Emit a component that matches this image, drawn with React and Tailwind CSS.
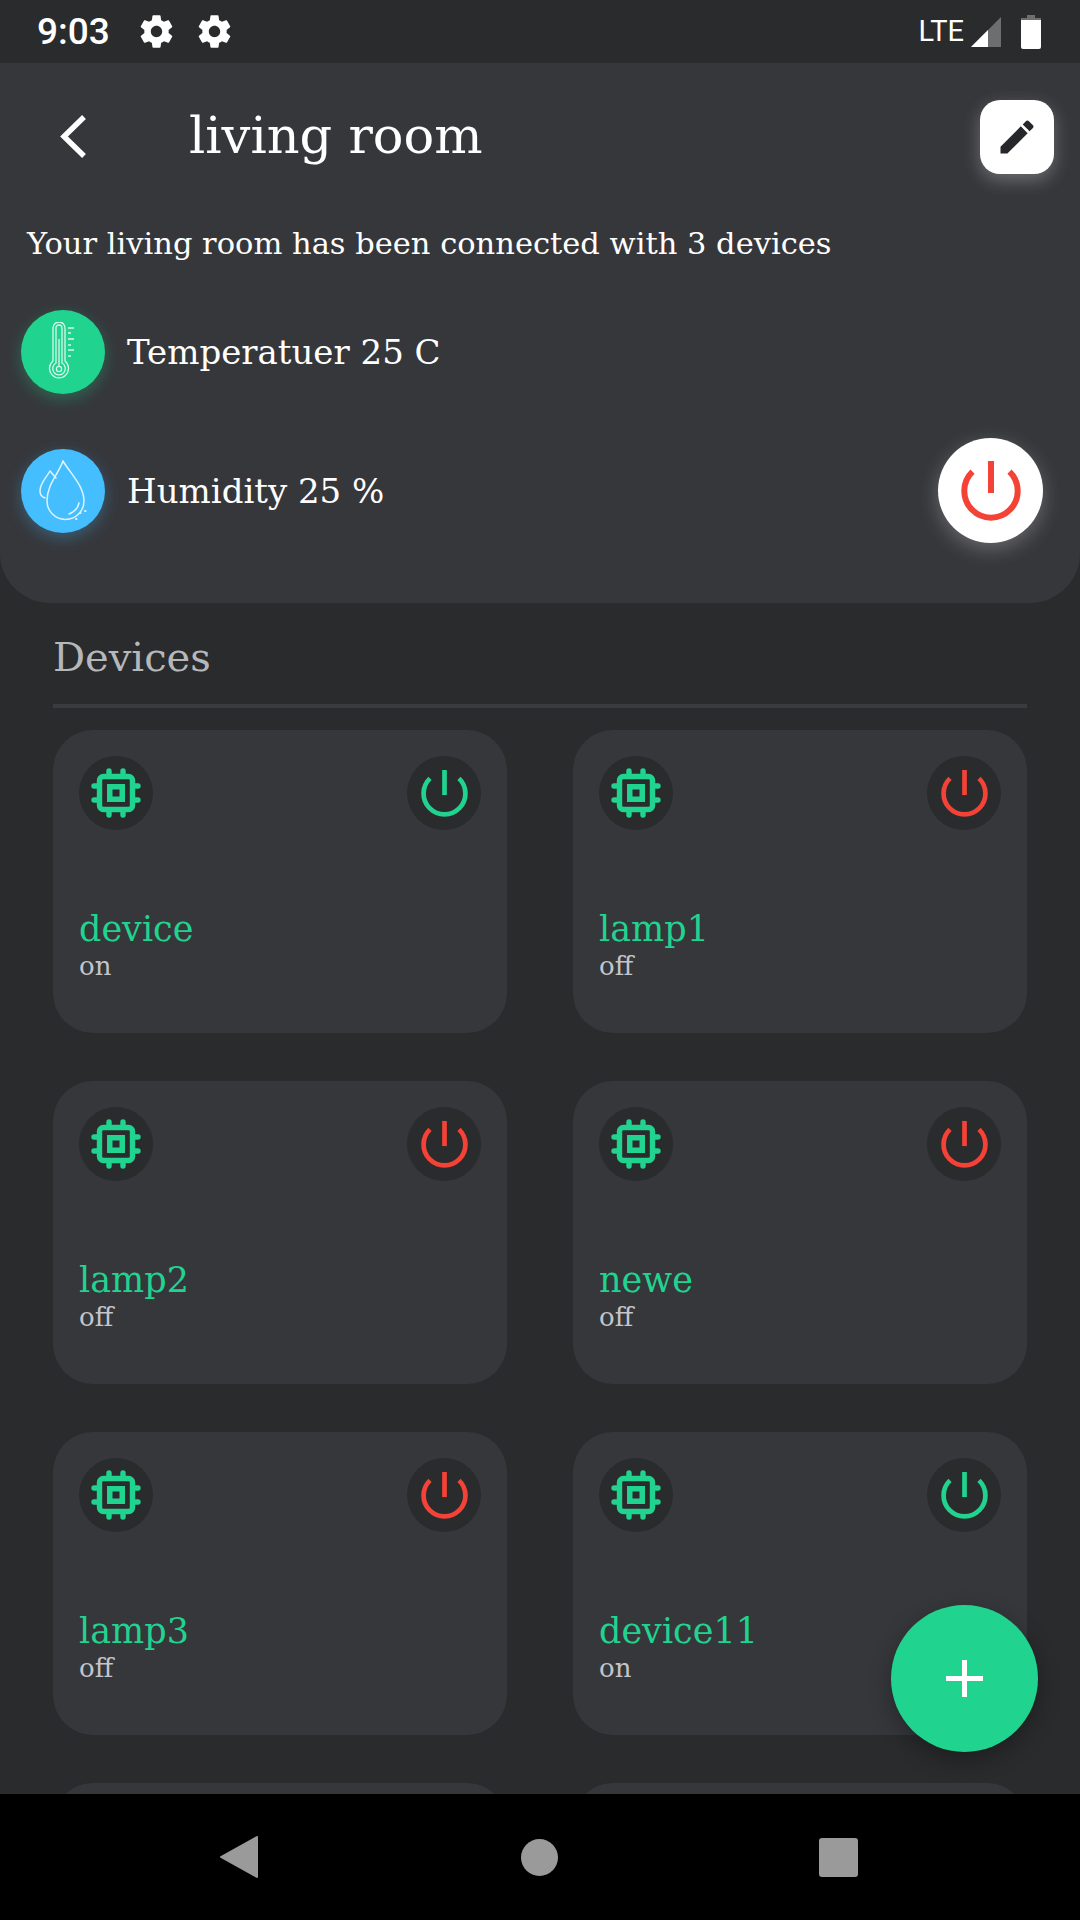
import React from "react";

const slab = "font-['DejaVu_Serif',serif]";

const devices = [
  { name: "device", on: true },
  { name: "lamp1", on: false },
  { name: "lamp2", on: false },
  { name: "newe", on: false },
  { name: "lamp3", on: false },
  { name: "device11", on: true },
  { name: "", on: false, hidden: true },
  { name: "", on: false, hidden: true },
];

const Gear = () => (
  <svg viewBox="0 0 24 24" className="w-[39px] h-[39px]" fill="#fff">
    <path d="M19.43 12.98c.04-.32.07-.64.07-.98s-.03-.66-.07-.98l2.11-1.65c.19-.15.24-.42.12-.64l-2-3.46c-.12-.22-.39-.3-.61-.22l-2.49 1c-.52-.4-1.08-.73-1.69-.98l-.38-2.65C14.46 2.18 14.25 2 14 2h-4c-.25 0-.46.18-.49.42l-.38 2.65c-.61.25-1.17.59-1.69.98l-2.49-1c-.23-.09-.49 0-.61.22l-2 3.46c-.13.22-.07.49.12.64l2.11 1.65c-.04.32-.07.65-.07.98s.03.66.07.98l-2.11 1.65c-.19.15-.24.42-.12.64l2 3.46c.12.22.39.3.61.22l2.49-1c.52.4 1.08.73 1.69.98l.38 2.65c.03.24.24.42.49.42h4c.25 0 .46-.18.49-.42l.38-2.65c.61-.25 1.17-.59 1.69-.98l2.49 1c.23.09.49 0 .61-.22l2-3.46c.12-.22.07-.49-.12-.64l-2.11-1.65zM12 15.5c-1.93 0-3.5-1.57-3.5-3.5s1.57-3.5 3.5-3.5 3.5 1.57 3.5 3.5-1.57 3.5-3.5 3.5z" />
  </svg>
);

const PowerIcon = ({ color, className }) => (
  <svg viewBox="0 0 60 60" className={className} fill="none" stroke={color} strokeWidth="6">
    <path d="M11.5 10.7A26.7 26.7 0 1 0 48.5 10.7" />
    <path d="M30 0v32" />
  </svg>
);

const ChipIcon = () => (
  <svg viewBox="0 0 50 50" className="w-[50px] h-[50px] blur-[0.5px]" fill="none" stroke="#20d490" strokeWidth="5.4" strokeLinecap="round">
    <rect x="8.5" y="8.5" width="33" height="33" rx="4" />
    <rect x="18.75" y="18.75" width="12.5" height="12.5" strokeWidth="5.5" />
    <path d="M18 3v5M32 3v5M18 42v5M32 42v5M3 18h5M3 32h5M42 18h5M42 32h5" />
  </svg>
);

const Thermometer = () => (
  <svg viewBox="0 0 30 60" className="w-[30px] h-[60px]" fill="none" stroke="#d8f7ea" strokeWidth="1.3">
    <path d="M5 39V6a6 6 0 0 1 12 0v33a9.5 9.5 0 1 1-12 0z" />
    <path d="M8 41V6a3 3 0 0 1 6 0v35a6.3 6.3 0 1 1-6 0z" />
    <circle cx="11" cy="47" r="2.6" />
    <path d="M11 17v27M20 6h6M20 11h3M20 17h6M20 23h3M20 28h6M20 34h3" />
  </svg>
);

const Drop = () => (
  <svg viewBox="0 0 48 62" className="w-[48px] h-[62px]" fill="none" stroke="#dff4ff" strokeWidth="1.5" strokeLinecap="round">
    <path d="M24 1C20 13 8 24 8 41a18.5 18.5 0 0 0 37 0C45 26 31 13 24 1z" />
    <path d="M11 11C7 18 1 23 1 31c0 3 2 6 5 7M11 11l6 7" />
    <path d="M30 54c5-2 9-6 10-11" />
    <path d="M41 53h.5M46 51h.5M37 59h.5" strokeWidth="2" />
  </svg>
);

const StatRow = ({ bg, shadow, label, children }) => (
  <div className="flex items-center h-[84px]">
    <div className={`w-[84px] h-[84px] rounded-full flex items-center justify-center ${bg} ${shadow}`}>
      {children}
    </div>
    <span className={`ml-[22px] text-[34px] text-white ${slab}`}>{label}</span>
  </div>
);

const DeviceCard = ({ name, on }) => (
  <div className="h-[303px] rounded-[40px] bg-[#36373b] px-[26px] pt-[26px]">
    <div className="flex justify-between">
      <div className="w-[74px] h-[74px] rounded-full bg-[#2a2b2d] flex items-center justify-center">
        <ChipIcon />
      </div>
      <div className="w-[74px] h-[74px] rounded-full bg-[#2a2b2d] flex items-center justify-center">
        <PowerIcon color={on ? "#20d490" : "#f44336"} className="w-[47px] h-[47px]" />
      </div>
    </div>
    <div className={`mt-[80px] text-[35px] leading-[38px] text-[#20d490] ${slab}`}>{name}</div>
    <div className={`mt-[2px] text-[26px] leading-[32px] text-[#c4c5c9] ${slab}`}>{on ? "on" : "off"}</div>
  </div>
);

export default function App() {
  return (
    <div className="relative w-[1080px] h-[1920px] overflow-hidden flex flex-col bg-[#2a2b2d]">
      {/* status bar */}
      <div className="h-[63px] shrink-0 flex items-center pl-[37px] pr-[39px] font-['Roboto',sans-serif] text-white">
        <span className="text-[37px] font-medium leading-none w-[100px]">9:03</span>
        <div className="flex gap-[19px]">
          <Gear />
          <Gear />
        </div>
        <span className="ml-auto text-[29px] leading-none">LTE</span>
        <svg viewBox="0 0 32 32" className="ml-[6px] w-[32px] h-[32px]">
          <path d="M31 1v30H1z" fill="#6d6e70" />
          <path d="M18 14v17H1z" fill="#fff" />
        </svg>
        <svg viewBox="0 0 20 34" className="ml-[19px] w-[20px] h-[34px]">
          <path d="M6 0h8v3h6v5H0V3h6z" fill="#6d6e70" />
          <path d="M0 5h20v27a2 2 0 0 1-2 2H2a2 2 0 0 1-2-2z" fill="#fff" />
        </svg>
      </div>

      {/* room header */}
      <div className="h-[540px] shrink-0 rounded-b-[50px] bg-[#36373b] relative">
        <div className="flex items-center h-[73px] mt-[37px] pl-[59px] pr-[26px]">
          <svg viewBox="0 0 27 43" className="w-[27px] h-[43px]" fill="none" stroke="#fff" strokeWidth="5.4">
            <path d="M25 2L5 21.5 25 41" />
          </svg>
          <h1 className={`ml-[103px] text-[51px] text-white ${slab}`}>living room</h1>
          <div className="ml-auto w-[74px] h-[74px] rounded-[20px] bg-white flex items-center justify-center shadow-[0_6px_18px_rgba(255,255,255,0.28)]">
            <svg viewBox="0 0 24 24" className="w-[44px] h-[44px]" fill="#26272a">
              <path d="M3 17.25V21h3.75L17.81 9.94l-3.75-3.75L3 17.25zM20.71 7.04c.39-.39.39-1.02 0-1.41l-2.34-2.34c-.39-.39-1.02-.39-1.41 0l-1.83 1.83 3.75 3.75 1.83-1.83z" />
            </svg>
          </div>
        </div>
        <p className={`mt-[51px] pl-[27px] text-[30.5px] leading-[40px] text-white ${slab}`}>
          Your living room has been connected with 3 devices
        </p>
        <div className="mt-[46px] pl-[21px] flex flex-col gap-[55px]">
          <StatRow bg="bg-[#20d490]" shadow="shadow-[0_5px_16px_rgba(32,212,144,0.3)]" label="Temperatuer 25 C">
            <Thermometer />
          </StatRow>
          <StatRow bg="bg-[#44beff]" shadow="shadow-[0_5px_16px_rgba(68,190,255,0.3)]" label="Humidity 25 %">
            <Drop />
          </StatRow>
        </div>
        <div className="absolute left-[938px] top-[375px] w-[105px] h-[105px] rounded-full bg-white flex items-center justify-center shadow-[0_6px_20px_rgba(255,255,255,0.25)]">
          <PowerIcon color="#f44336" className="w-[60px] h-[60px]" />
        </div>
      </div>

      {/* devices */}
      <div className="flex-1 overflow-hidden px-[53px] min-h-0">
        <div className={`pt-[32px] text-[40px] leading-[44px] text-[#b6b7bb] ${slab}`}>Devices</div>
        <div className="mt-[25px] h-[4px] bg-[#3a3b3f]" />
        <div className="mt-[22px] grid grid-cols-2 gap-x-[66px] gap-y-[48px]">
          {devices.map((d, i) => (d.hidden ? <div key={i} className="h-[303px] rounded-[40px] bg-[#36373b]" /> : <DeviceCard key={i} name={d.name} on={d.on} />))}
        </div>
      </div>

      {/* nav bar */}
      <div className="h-[126px] shrink-0 bg-black relative flex items-center">
        <svg viewBox="0 0 38 42" className="ml-[220px] w-[38px] h-[42px]" fill="#9a9a9a" stroke="#9a9a9a" strokeWidth="2" strokeLinejoin="round">
          <path d="M37 1v40L1 21z" />
        </svg>
        <div className="ml-[263px] w-[37px] h-[37px] rounded-full bg-[#9a9a9a]" />
        <div className="ml-[261px] w-[39px] h-[39px] rounded-[3px] bg-[#9a9a9a]" />
      </div>

      {/* add button */}
      <div className="absolute left-[891px] top-[1605px] w-[147px] h-[147px] rounded-full bg-[#20d490] flex items-center justify-center shadow-[0_8px_22px_rgba(0,0,0,0.3)]">
        <svg viewBox="0 0 37 37" className="w-[37px] h-[37px]" fill="#fff">
          <path d="M16 0h5v16h16v5H21v16h-5V21H0v-5h16z" />
        </svg>
      </div>
    </div>
  );
}
